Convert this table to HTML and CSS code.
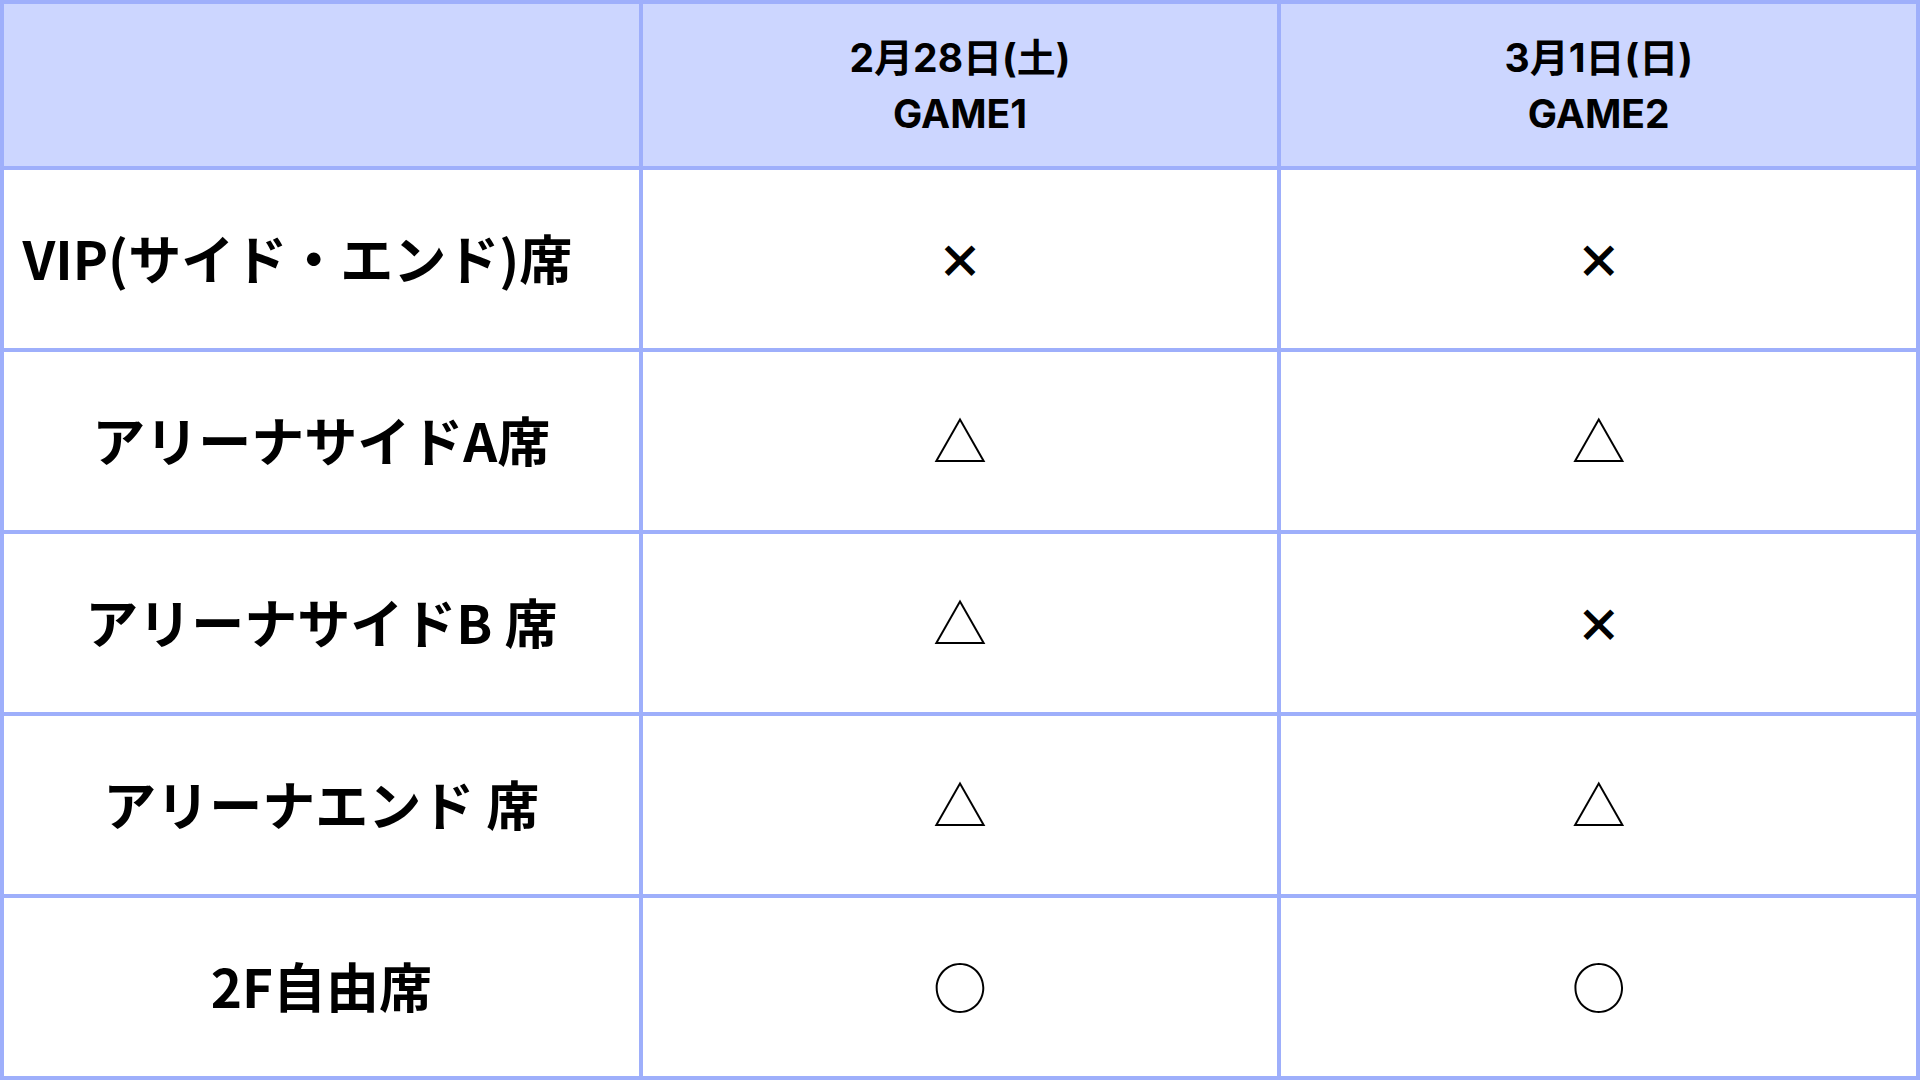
FILE: index.html
```html
<!DOCTYPE html>
<html lang="ja">
<head>
<meta charset="utf-8">
<title>座席表</title>
<link rel="stylesheet" href="styles.css">
</head>
<body>
<div class="table">
  <div class="cell head"></div>
  <div class="cell head"><span>2月28日(土)</span><span>GAME1</span></div>
  <div class="cell head"><span>3月1日(日)</span><span>GAME2</span></div>

  <div class="cell label label-vip">VIP(サイド・エンド)席</div>
  <div class="cell mark cross">×</div>
  <div class="cell mark cross">×</div>

  <div class="cell label">アリーナサイドA席</div>
  <div class="cell mark shape">△</div>
  <div class="cell mark shape">△</div>

  <div class="cell label">アリーナサイドB 席</div>
  <div class="cell mark shape">△</div>
  <div class="cell mark cross">×</div>

  <div class="cell label">アリーナエンド 席</div>
  <div class="cell mark shape">△</div>
  <div class="cell mark shape">△</div>

  <div class="cell label">2F自由席</div>
  <div class="cell mark shape">○</div>
  <div class="cell mark shape">○</div>
</div>
</body>
</html>
```
FILE: styles.css
```css
html, body {
  margin: 0;
  padding: 0;
  background: #ffffff;
}

body {
  font-family: "Noto Sans CJK JP", "Noto Sans", sans-serif;
  color: #000000;
}

.table {
  display: grid;
  grid-template-columns: repeat(3, 1fr);
  grid-template-rows: 162px repeat(5, 178px);
  gap: 4px;
  padding: 4px;
  width: 1920px;
  height: 1080px;
  box-sizing: border-box;
  background: #9eaffb;
}

.cell {
  background: #ffffff;
  display: flex;
  align-items: center;
  justify-content: center;
  text-align: center;
}

.head {
  background: #ccd6ff;
  flex-direction: column;
  font-family: Inter, "Noto Sans CJK JP", sans-serif;
  font-size: 39px;
  font-weight: 700;
  line-height: 56px;
  padding-top: 2px;
}

.label {
  font-size: 53px;
  font-weight: 700;
  white-space: nowrap;
  padding-bottom: 5px;
}

.label-vip {
  padding-right: 48px;
}

.mark {
  line-height: 1;
}

.cross {
  font-size: 46px;
  font-weight: 900;
  padding-bottom: 3px;
}

.shape {
  font-size: 54px;
  font-weight: 400;
  padding-bottom: 2px;
}
```
